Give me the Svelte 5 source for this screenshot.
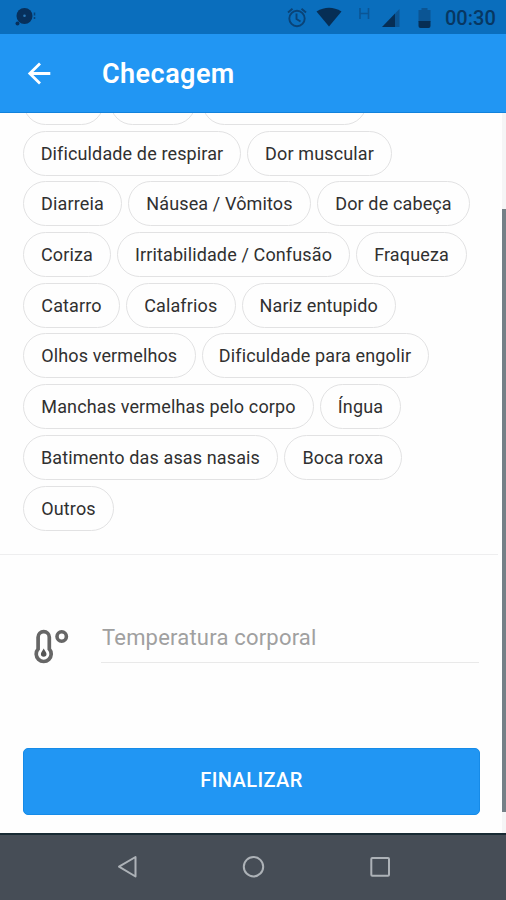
<script>
  // Chip rows; w is the chip's width in pixels.
  const rows = [
    [{ t: '', w: 81 }, { t: '', w: 86 }, { t: '', w: 165 }],
    [{ t: 'Dificuldade de respirar', w: 218 }, { t: 'Dor muscular', w: 145 }],
    [{ t: 'Diarreia', w: 99 }, { t: 'Náusea / Vômitos', w: 183 }, { t: 'Dor de cabeça', w: 153 }],
    [{ t: 'Coriza', w: 88 }, { t: 'Irritabilidade / Confusão', w: 233 }, { t: 'Fraqueza', w: 111 }],
    [{ t: 'Catarro', w: 97 }, { t: 'Calafrios', w: 109.5 }, { t: 'Nariz entupido', w: 154.5 }],
    [{ t: 'Olhos vermelhos', w: 172.5 }, { t: 'Dificuldade para engolir', w: 227 }],
    [{ t: 'Manchas vermelhas pelo corpo', w: 291 }, { t: 'Íngua', w: 81 }],
    [{ t: 'Batimento das asas nasais', w: 255 }, { t: 'Boca roxa', w: 118 }],
    [{ t: 'Outros', w: 91 }]
  ];
</script>

<div class="screen">
  <div class="status">
    <svg class="notif" width="24" height="20" viewBox="0 0 24 20">
      <circle cx="10.500" cy="10" r="8" fill="#07305c" />
      <circle cx="10.500" cy="9.700" r="1.300" fill="#2b78b8" />
      <circle cx="3.500" cy="17.500" r="2" fill="#07305c" />
      <path d="M20.500 6.500v3M20.500 11v2" stroke="#07305c" stroke-width="1.500" opacity=".7" />
    </svg>
    <svg class="icons" width="150" height="34" viewBox="284 0 150 34">
      <g fill="none" stroke="#0a4377" stroke-width="1.900">
        <circle cx="297" cy="18.500" r="7.700" />
        <path d="M296.500 13.500v5.500l4 2.500M288 12.500l4.500-3.800M306 12.500l-4.500-3.800" />
      </g>
      <path d="M316.500 11.500Q329 4 341.500 11.500L329 26.500Z" fill="#062e55" />
      <path d="M360 8v11M368.500 8v11M360 13.500h8.500" stroke="#0b5595" stroke-width="1.600" />
      <path d="M382 27L395 13.500V27Z" fill="#062e55" />
      <path d="M395 13.500L399.500 9V27H395Z" fill="#0b5594" />
      <path d="M418.500 10h3V8h6v2h3v12h-12Z" fill="#0b5594" />
      <path d="M418.500 21h12v5q0 2-2 2h-8q-2 0-2-2Z" fill="#062e55" />
    </svg>
    <span class="clock">00:30</span>
  </div>

  <header>
    <svg width="26" height="26" viewBox="0 0 26 26" fill="none" stroke="#fff" stroke-width="2.800">
      <path d="M25.300 13.500H5M15 3.500L4.800 13.500 15 23.500" />
    </svg>
    <h1>Checagem</h1>
  </header>

  <main>
    <div class="content">
      <section class="chips">
        {#each rows as row}
          <div class="row">
            {#each row as chip}
              <span class="chip" style="width: {chip.w}px">{chip.t}</span>
            {/each}
          </div>
        {/each}
      </section>

      <section class="field">
        <svg width="38" height="38" viewBox="0 0 38 38" fill="none" stroke="#666" stroke-width="3.700">
          <path d="M6.100 21V9.300a5.600 5.600 0 0 1 11.200 0V21a7.500 7.500 0 1 1-11.200 0Z" />
          <path d="M11.700 20.500c1 2.300 2.800 3.600 2.800 5.500a2.800 2.800 0 0 1-5.600 0c0-1.900 1.800-3.200 2.800-5.500Z" fill="#555" stroke="none" />
          <circle cx="29.700" cy="8.500" r="4.700" stroke-width="3.600" />
        </svg>
        <div class="input">Temperatura corporal</div>
      </section>

      <button>FINALIZAR</button>
    </div>
    <div class="scroll"><div class="thumb"></div></div>
  </main>

  <nav>
    <svg width="506" height="67" viewBox="0 833 506 67" fill="none" stroke="#adb2b7" stroke-width="2" stroke-linejoin="round">
      <path d="M135.500 857V876.500L119 866.700Z" />
      <circle cx="253.500" cy="866.700" r="9.700" />
      <rect x="371.300" y="858" width="17.700" height="17.700" rx="1" />
    </svg>
  </nav>
</div>

<style>
  .screen {
    width: 506px;
    height: 900px;
    display: flex;
    flex-direction: column;
    overflow: hidden;
    background: #fefefe;
    font-family: Roboto, "Liberation Sans", sans-serif;
  }
  svg { display: block; flex: none; }
  .status {
    height: 34px;
    flex: none;
    box-sizing: border-box;
    padding: 0 11px 0 14px;
    background: #0a6ebd;
    display: flex;
    align-items: center;
  }
  .notif { margin-bottom: 3px; }
  .icons { margin-left: auto; }
  .clock {
    width: 50px;
    margin-left: 11px;
    color: #073762;
    font-size: 20px;
    font-weight: 500;
    line-height: 34px;
    white-space: nowrap;
    padding-top: 2px;
  }
  header {
    height: 79px;
    flex: none;
    box-sizing: border-box;
    background: #2196f3;
    border-bottom: 1px solid #1282dc;
    display: flex;
    align-items: center;
    padding-left: 25px;
  }
  h1 {
    margin: 2px 0 0 51px;
    color: #fff;
    font-size: 27px;
    font-weight: 600;
    line-height: 40px;
    letter-spacing: 0.450px;
  }
  main {
    height: 720px;
    flex: none;
    display: flex;
    overflow: hidden;
  }
  .content { width: 502px; }
  .chips {
    height: 441px;
    overflow: hidden;
    border-bottom: 1px solid #eeeeef;
    width: 498px;
    display: flex;
    flex-direction: column;
    gap: 5.700px;
  }
  .row {
    display: flex;
    gap: 6px;
    padding-left: 23px;
    height: 45px;
    flex: none;
  }
  .row:first-child { margin-top: -33px; }
  .chip {
    box-sizing: border-box;
    flex: none;
    height: 45px;
    border: 1.500px solid #e2e2e3;
    border-radius: 23px;
    font-size: 18px;
    line-height: 43px;
    letter-spacing: 0.130px;
    color: #303030;
    text-align: center;
    white-space: nowrap;
  }
  .field {
    display: flex;
    height: 50px;
    padding: 58px 0 0 32px;
  }
  .field svg { margin-top: 15px; }
  .input {
    width: 378px;
    height: 50px;
    margin-left: 31px;
    box-sizing: border-box;
    padding-left: 1px;
    border-bottom: 1px solid #e9e9e9;
    color: #a0a0a0;
    font-size: 22px;
    line-height: 50px;
    letter-spacing: 0.200px;
    white-space: nowrap;
  }
  button {
    display: block;
    width: 457px;
    height: 67px;
    margin: 84.500px 0 0 23px;
    padding: 0 0 2px;
    border: 1px solid #168be8;
    border-radius: 5px;
    background: #2196f3;
    color: #fff;
    font-family: inherit;
    font-size: 20px;
    font-weight: 500;
    letter-spacing: 0.400px;
  }
  .scroll {
    width: 4px;
    background: #f5f5f6;
    padding-top: 96px;
    box-sizing: border-box;
  }
  .thumb { height: 603px; background: #758087; }
  nav {
    height: 67px;
    flex: none;
    box-sizing: border-box;
    background: #464d56;
    box-shadow: inset 0 2px #182a33;
  }
</style>
